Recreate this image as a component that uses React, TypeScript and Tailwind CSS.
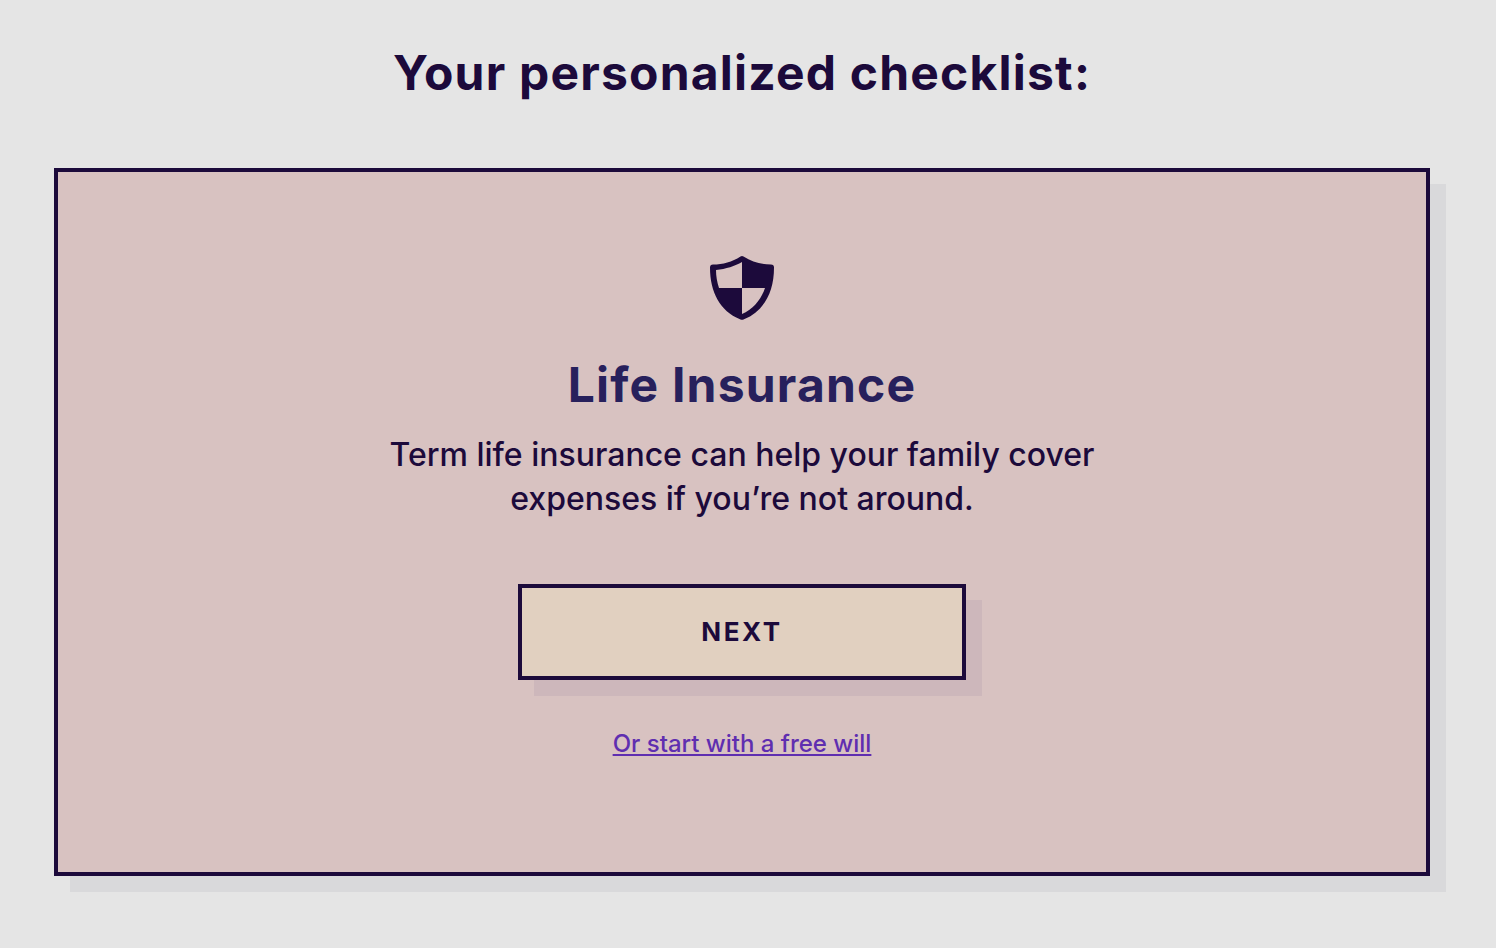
export default function App() {
    return (
        <main className="min-h-screen bg-[#e5e5e5] pt-11 pb-18 pl-[54px] pr-[66px] font-['Inter',sans-serif] text-[#1c0a3b] text-center">
            <h1 className="text-5xl leading-[58px] font-bold tracking-wide">Your personalized checklist:</h1>
            <section className="mt-[66px] flex flex-col items-center border-4 border-[#1c0a3b] bg-[#d8c2c1] pt-21 pb-28 shadow-[16px_16px_0_#d9d9db]">
                <svg className="size-16" viewBox="0 0 64 64" fill="currentColor" aria-hidden="true">
                    <path fillRule="evenodd" d="M30.5 .5Q32 -.5 33.5 .5C42 6 51 8.5 61 8.5Q64 8.5 64 11.5C64 36 54 55 34 63.3Q32 64.3 30 63.3C10 55 0 36 0 11.5Q0 8.5 3 8.5C13 8.5 22 6 30.5 .5ZM32 6V32H9C7 26 6 20 6 14C16 13 25 10 32 6ZM32 32H55C51 44 43 53 32 58Z" />
                </svg>
                <h2 className="mt-9 text-5xl leading-[58px] font-bold tracking-wide text-[#27205c]">Life Insurance</h2>
                <p className="mt-[19px] max-w-[720px] text-[32px] leading-11 font-medium">Term life insurance can help your family cover expenses if you’re not around.</p>
                <button type="button" className="mt-[63px] h-24 w-full max-w-[448px] border-4 border-[#1c0a3b] bg-[#e1d0c0] pb-0.5 text-[26px] font-bold tracking-widest shadow-[16px_16px_0_#cdb7bb]">NEXT</button>
                <a href="#" className="mt-12 text-2xl font-medium text-[#5f2eb0] underline">Or start with a free will</a>
            </section>
        </main>
    )
}
